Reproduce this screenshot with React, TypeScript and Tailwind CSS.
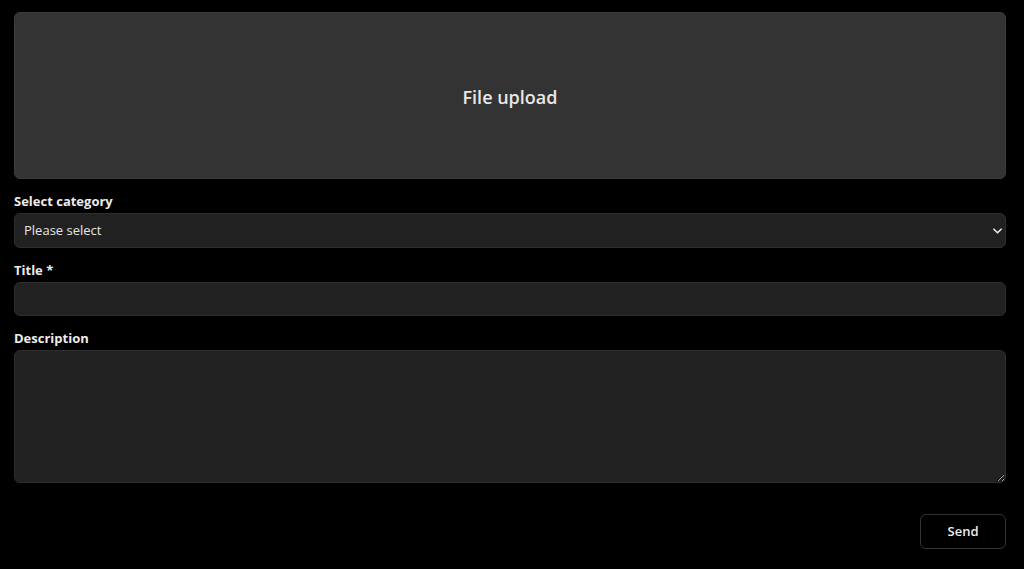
import { useState } from 'react'

const Chevron = () => (
  <svg
    viewBox="0 0 10 6"
    className="pointer-events-none absolute right-[4px] top-1/2 h-[6px] w-[9px] -translate-y-1/2"
    fill="none"
    stroke="#e8e8e8"
    strokeWidth="1.8"
    strokeLinecap="round"
    strokeLinejoin="round"
  >
    <path d="M1 1l4 4 4-4" />
  </svg>
)

const App = () => {
  const [category, setCategory] = useState('')
  const [title, setTitle] = useState('')
  const [description, setDescription] = useState('')

  return (
    <div
      className="min-h-[569px] bg-black pl-[14px] pr-[18px] pt-[12px] pb-[20px] text-[#e6e6e6] [color-scheme:dark]"
      style={{ fontFamily: '"Open Sans", "Noto Sans", sans-serif' }}
    >
      <div className="flex h-[167px] items-center justify-center rounded-[6px] border border-[#3c3c3c] bg-[#333333] pt-[4px]">
        <span className="text-[18px] font-semibold text-[#e8e8e8]">File upload</span>
      </div>

      <label className="mt-[13px] block text-[13px] leading-[18px] font-bold text-[#ececec]">
        Select category
      </label>
      <div className="relative mt-[3px]">
        <select
          value={category}
          onChange={(e) => setCategory(e.target.value)}
          className="h-[35px] w-full appearance-none rounded-[6px] border border-[#2e2e2e] bg-[#212121] pl-[9px] text-[13px] text-[#e6e6e6] outline-none"
        >
          <option value="">Please select</option>
          <option value="1">Category 1</option>
          <option value="2">Category 2</option>
        </select>
        <Chevron />
      </div>

      <label className="mt-[13px] block text-[13px] leading-[18px] font-bold text-[#ececec]">
        Title *
      </label>
      <input
        value={title}
        onChange={(e) => setTitle(e.target.value)}
        className="mt-[3px] block h-[34px] w-full rounded-[6px] border border-[#2e2e2e] bg-[#212121] px-[9px] text-[13px] text-[#e6e6e6] outline-none"
      />

      <label className="mt-[13px] block text-[13px] leading-[18px] font-bold text-[#ececec]">
        Description
      </label>
      <textarea
        value={description}
        onChange={(e) => setDescription(e.target.value)}
        className="mt-[3px] block h-[133px] w-full resize-y rounded-[6px] border border-[#2e2e2e] bg-[#212121] px-[9px] py-[6px] text-[13px] text-[#e6e6e6] outline-none"
      />

      <div className="mt-[31px] flex justify-end">
        <button className="h-[35px] w-[86px] rounded-[6px] border border-[#333333] bg-black text-[13px] font-semibold text-[#ececec]">
          Send
        </button>
      </div>
    </div>
  )
}

export default App
